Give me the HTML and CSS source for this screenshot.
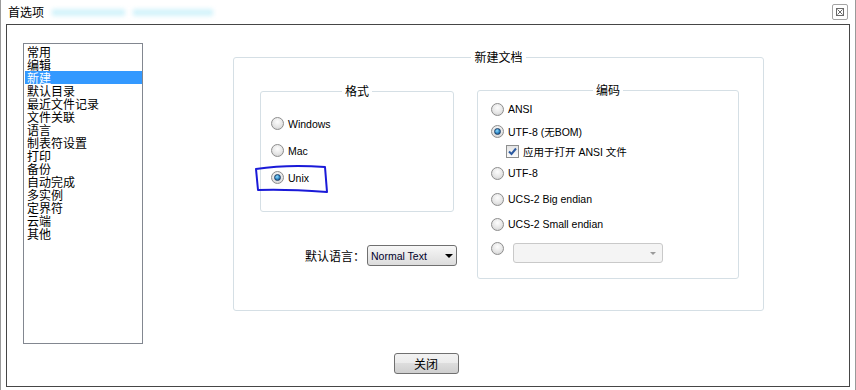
FILE: index.html
```html
<html lang="zh-CN">

<head>
    <meta charset="UTF-8">
    <meta name="viewport" content="width=device-width, initial-scale=1.0">
    <title>首选项</title>
    <link rel="stylesheet" href="styles.css">
</head>

<body>
    <div class="window">
        <div class="titlebar">
            <span class="title">首选项</span>
            <span class="smudge a"></span>
            <span class="smudge b"></span>
            <span class="close-x">
                <svg width="14" height="14" viewBox="0 0 14 14">
                    <rect x="3.5" y="3.5" width="7" height="7" fill="none" stroke="#6a6a6a"/>
                    <path d="M4.5 4.5 L9.5 9.5 M9.5 4.5 L4.5 9.5" stroke="#6a6a6a" stroke-width="1"/>
                </svg>
            </span>
        </div>

        <div class="panel">
            <div class="top">
                <ul class="nav">
                    <li>常用</li>
                    <li>编辑</li>
                    <li class="active">新建</li>
                    <li>默认目录</li>
                    <li>最近文件记录</li>
                    <li>文件关联</li>
                    <li>语言</li>
                    <li>制表符设置</li>
                    <li>打印</li>
                    <li>备份</li>
                    <li>自动完成</li>
                    <li>多实例</li>
                    <li>定界符</li>
                    <li>云端</li>
                    <li>其他</li>
                </ul>

                <div class="group main">
                    <div class="group-title">新建文档</div>
                    <div class="main-body">
                        <div class="left-col">
                            <div class="group format">
                                <div class="group-title">格式</div>
                                <div class="options">
                                    <div class="opt"><span class="radio"></span>Windows</div>
                                    <div class="opt"><span class="radio"></span>Mac</div>
                                    <div class="opt"><span class="radio on"></span>Unix</div>
                                </div>
                            </div>
                            <div class="lang-row">
                                <span class="lang-label">默认语言：</span>
                                <div class="select">Normal Text<span class="arrow"></span></div>
                            </div>
                        </div>

                        <div class="group encoding">
                            <div class="group-title">编码</div>
                            <div class="enc-opts">
                                <div class="opt h24"><span class="radio"></span>ANSI</div>
                                <div class="opt h20"><span class="radio on"></span>UTF-8 (无BOM)</div>
                                <div class="opt h20">
                                    <span class="check">
                                        <svg width="11" height="11" viewBox="0 0 11 11">
                                            <path d="M2 5.5 L4.5 8 L9 2.5" fill="none" stroke="#2c5aa0" stroke-width="2"/>
                                        </svg>
                                    </span>应用于打开 ANSI 文件
                                </div>
                                <div class="opt h24"><span class="radio"></span>UTF-8</div>
                                <div class="opt h28"><span class="radio"></span>UCS-2 Big endian</div>
                                <div class="opt h22"><span class="radio"></span>UCS-2 Small endian</div>
                                <div class="opt combo-row">
                                    <span class="radio"></span>
                                    <div class="combo"><span class="combo-arrow"></span></div>
                                </div>
                            </div>
                        </div>
                    </div>
                </div>
            </div>

            <div class="footer">
                <button class="btn">关闭</button>
            </div>
        </div>

        <svg class="mark" width="856" height="390" viewBox="0 0 856 390">
            <path d="M256 169 C 275 166, 300 165, 325 167 L 327 192 C 300 190, 280 189, 258 190 Z"
                  fill="none" stroke="#1a1ad8" stroke-width="2" stroke-linejoin="round"/>
        </svg>
    </div>
</body>

</html>
```

FILE: styles.css
```css
body {
    margin: 0;
    background: #fff;
    font-family: "Noto Sans CJK SC", sans-serif;
    font-size: 12px;
    color: #000;
}
.window {
    position: relative;
    width: 856px;
    height: 390px;
    box-sizing: border-box;
    border-left: 1px solid #9a9a9a;
    border-right: 1px solid #9a9a9a;
    overflow: hidden;
}
.titlebar {
    height: 24px;
    display: flex;
    align-items: center;
    padding-left: 7px;
}
.title {
    line-height: 14px;
}
.smudge {
    height: 7px;
    margin-left: 8px;
    background: #d4f3fb;
    filter: blur(2px);
}
.smudge.a {
    width: 73px;
}
.smudge.b {
    width: 80px;
}
.close-x {
    margin-left: auto;
    margin-right: 7px;
    width: 16px;
    height: 16px;
    box-sizing: border-box;
    border: 1px solid #a4a4a4;
    border-radius: 2px;
    display: flex;
    align-items: center;
    justify-content: center;
}
.panel {
    margin-left: 5px;
    width: 844px;
    height: 363px;
    box-sizing: border-box;
    border: 1px solid #464646;
    display: flex;
    flex-direction: column;
}
.top {
    display: flex;
    align-items: flex-start;
}
.nav {
    list-style: none;
    margin: 18px 0 0 16px;
    padding: 1px 0;
    width: 120px;
    height: 301px;
    box-sizing: border-box;
    border: 1px solid #828790;
}
.nav li {
    height: 13px;
    line-height: 13px;
    margin-left: 1px;
    padding-left: 2px;
    white-space: nowrap;
}
.nav li.active {
    background: #3399ff;
    color: #fff;
}
.group {
    box-sizing: border-box;
    border: 1px solid #d5dfe5;
    border-radius: 3px;
}
.group-title {
    width: max-content;
    margin: -8px auto 0;
    padding: 0 3px;
    background: #fff;
    line-height: 14px;
}
.main {
    margin: 32px 0 0 90px;
    width: 531px;
    height: 254px;
}
.main-body {
    display: flex;
    align-items: flex-start;
    padding-left: 26px;
}
.left-col {
    margin-top: 27px;
    width: 194px;
}
.format {
    height: 121px;
}
.options {
    padding: 12px 0 0 10px;
}
.opt {
    display: flex;
    align-items: center;
    height: 27px;
    font-family: "Liberation Sans", "Noto Sans CJK SC", sans-serif;
    font-size: 10.5px;
    color: #000;
    white-space: nowrap;
}
.opt.h20 { height: 20px; }
.opt.h22 { height: 22px; }
.opt.h24 { height: 24px; }
.opt.h28 { height: 28px; }
.radio {
    position: relative;
    flex: none;
    width: 13px;
    height: 13px;
    box-sizing: border-box;
    margin-right: 4px;
    border: 1px solid #8d8d8d;
    border-radius: 50%;
    background: radial-gradient(circle at 50% 35%, #fdfdfd 0, #e6e6e6 55%, #cbcbcb 100%);
}
.radio.on::after {
    content: "";
    position: absolute;
    left: 2px;
    top: 2px;
    width: 7px;
    height: 7px;
    box-sizing: border-box;
    border-radius: 50%;
    border: 1px solid #1d3f66;
    background: radial-gradient(circle at 40% 35%, #8fdcff 0, #2e86c4 55%, #163e68 100%);
}
.lang-row {
    display: flex;
    justify-content: flex-end;
    align-items: center;
    gap: 2px;
    margin: 33px -3px 0 0;
}
.lang-label {
    line-height: 14px;
}
.select {
    display: flex;
    align-items: center;
    width: 90px;
    height: 21px;
    box-sizing: border-box;
    padding-left: 3px;
    border: 1px solid #707070;
    border-radius: 3px;
    background: linear-gradient(#f7f7f7, #dcdcdc);
    font-family: "Liberation Sans", sans-serif;
    font-size: 10.5px;
    color: #00002a;
}
.arrow {
    margin-left: auto;
    margin-right: 3px;
    border-left: 4px solid transparent;
    border-right: 4px solid transparent;
    border-top: 4px solid #000;
}
.encoding {
    width: 262px;
    height: 189px;
    margin: 26px 0 0 23px;
}
.enc-opts {
    padding-left: 13px;
}
.check {
    flex: none;
    width: 13px;
    height: 13px;
    box-sizing: border-box;
    margin: 0 4px 0 15px;
    border: 1px solid #8e8f8f;
    background: linear-gradient(#e4e4e4, #fbfbfb);
    display: flex;
    align-items: center;
    justify-content: center;
}
.combo-row {
    align-items: flex-start;
}
.combo-row .radio {
    margin-top: 7px;
}
.combo {
    display: flex;
    align-items: center;
    width: 150px;
    height: 20px;
    box-sizing: border-box;
    margin: 8px 0 0 5px;
    border: 1px solid #c9c9c9;
    border-radius: 3px;
    background: #f4f4f4;
}
.combo-arrow {
    margin-left: auto;
    margin-right: 6px;
    border-left: 3px solid transparent;
    border-right: 3px solid transparent;
    border-top: 3px solid #9a9a9a;
}
.footer {
    display: flex;
    justify-content: center;
    margin-top: 9px;
    padding-right: 4px;
}
.btn {
    width: 65px;
    height: 21px;
    padding: 0;
    border: 1px solid #707070;
    border-radius: 3px;
    background: linear-gradient(#f2f2f2 0, #ebebeb 50%, #dddddd 50%, #cfcfcf 100%);
    font-family: "Noto Sans CJK SC", sans-serif;
    font-size: 12px;
    color: #000;
    line-height: 14px;
}
.mark {
    position: absolute;
    left: -1px;
    top: 0;
    pointer-events: none;
}
```
